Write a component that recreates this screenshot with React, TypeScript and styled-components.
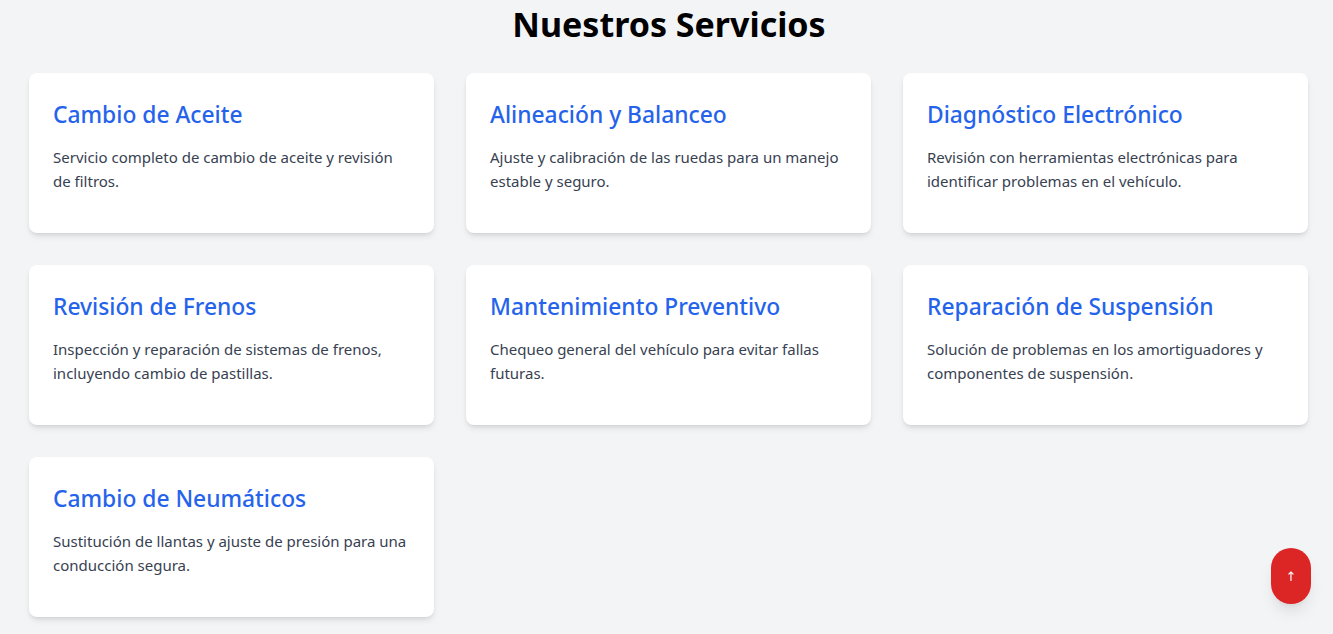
import React from 'react';
import styled, { createGlobalStyle } from 'styled-components';

const GlobalStyle = createGlobalStyle`
  html, body {
    margin: 0;
    padding: 0;
    background: #f3f4f6;
    font-family: "Segoe UI", "Noto Sans", "Liberation Sans", sans-serif;
  }
`;

const Page = styled.section`
  padding: 0 24px 16px 29px;
`;

const Heading = styled.h2`
  margin: 0 0 25px;
  font-size: 34px;
  line-height: 48px;
  font-weight: 700;
  text-align: center;
  color: #000;
`;

const Grid = styled.div`
  display: grid;
  grid-template-columns: repeat(3, 405px);
  column-gap: 32px;
  row-gap: 32px;
`;

const Card = styled.article`
  background: #fff;
  border-radius: 8px;
  box-shadow: 0 4px 6px -1px rgba(0, 0, 0, 0.1), 0 2px 4px -2px rgba(0, 0, 0, 0.1);
  padding: 24px 24px 40px;
  height: 160px;
  box-sizing: border-box;
`;

const Title = styled.h3`
  margin: 0 0 12px;
  font-size: 22.8px;
  line-height: 36px;
  font-weight: 500;
  color: #2563eb;
`;

const Desc = styled.p`
  margin: 0;
  font-size: 15px;
  line-height: 24px;
  color: #374151;
`;

const TopButton = styled.button`
  position: fixed;
  right: 22px;
  bottom: 30px;
  width: 40px;
  height: 56px;
  padding: 0;
  border: none;
  border-radius: 999px;
  background: #dc2626;
  color: #fff;
  font-family: "DejaVu Sans", sans-serif;
  font-size: 13px;
  box-shadow: 0 10px 15px -3px rgba(0, 0, 0, 0.1), 0 4px 6px -4px rgba(0, 0, 0, 0.1);
  cursor: pointer;
`;

const services = [
  { title: 'Cambio de Aceite', text: 'Servicio completo de cambio de aceite y revisión de filtros.' },
  { title: 'Alineación y Balanceo', text: 'Ajuste y calibración de las ruedas para un manejo estable y seguro.' },
  { title: 'Diagnóstico Electrónico', text: 'Revisión con herramientas electrónicas para identificar problemas en el vehículo.' },
  { title: 'Revisión de Frenos', text: 'Inspección y reparación de sistemas de frenos, incluyendo cambio de pastillas.' },
  { title: 'Mantenimiento Preventivo', text: 'Chequeo general del vehículo para evitar fallas futuras.' },
  { title: 'Reparación de Suspensión', text: 'Solución de problemas en los amortiguadores y componentes de suspensión.' },
  { title: 'Cambio de Neumáticos', text: 'Sustitución de llantas y ajuste de presión para una conducción segura.' },
];

export default function App() {
  return (
    <>
      <GlobalStyle />
      <Page>
        <Heading>Nuestros Servicios</Heading>
        <Grid>
          {services.map(s => (
            <Card key={s.title}>
              <Title>{s.title}</Title>
              <Desc>{s.text}</Desc>
            </Card>
          ))}
        </Grid>
      </Page>
      <TopButton aria-label="Volver arriba">↑</TopButton>
    </>
  );
}
